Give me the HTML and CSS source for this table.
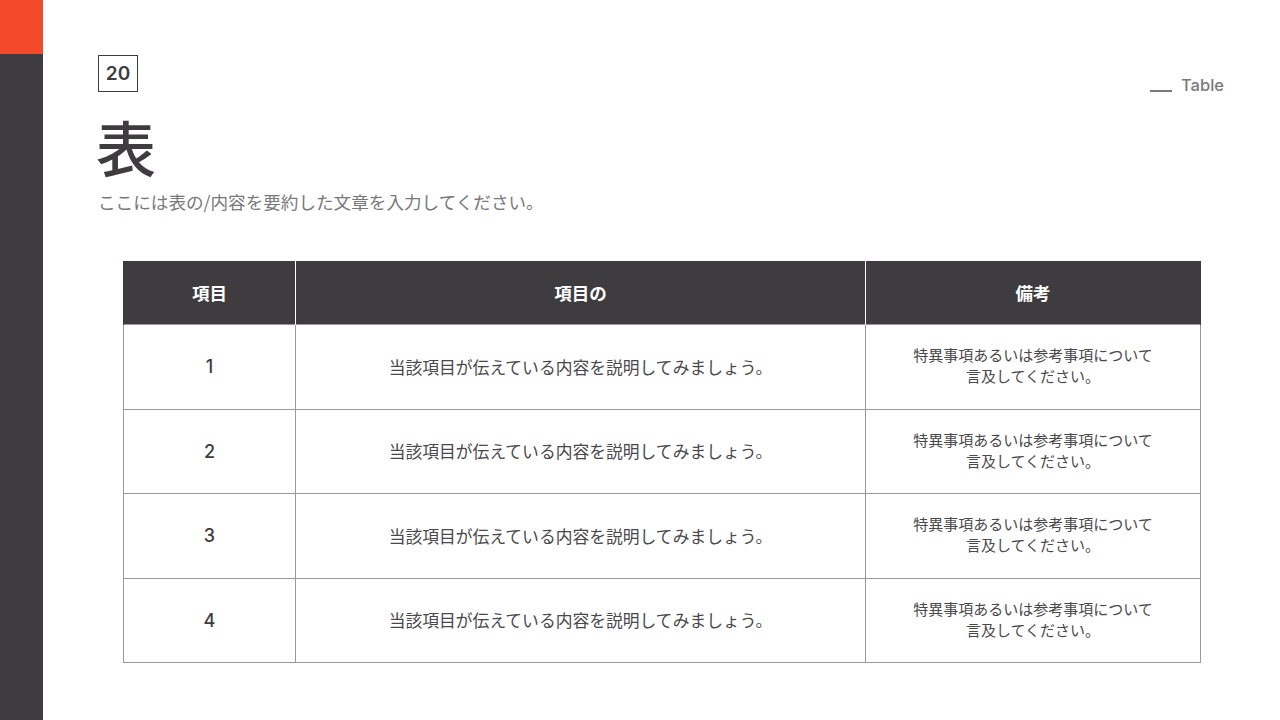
FILE: index.html
```html
<!DOCTYPE html>
<html lang="ja">
<head>
<meta charset="utf-8">
<link rel="stylesheet" href="styles.css">
</head>
<body>
<div class="slide">
  <aside class="side">
    <div class="side-accent"></div>
    <div class="side-dark"></div>
  </aside>
  <main class="main">
    <header class="head">
      <div class="head-left">
        <div class="num">20</div>
        <h1 class="title">表</h1>
        <p class="sub">ここには表の/内容を要約した文章を入力してください。</p>
      </div>
      <div class="label"><span class="dash"></span>Table</div>
    </header>
    <table class="tbl">
      <colgroup>
        <col class="c1"><col class="c2"><col class="c3">
      </colgroup>
      <thead>
        <tr><th>項目</th><th>項目の</th><th>備考</th></tr>
      </thead>
      <tbody>
        <tr><td class="n">1</td><td>当該項目が伝えている内容を説明してみましょう。</td><td class="r">特異事項あるいは参考事項について<br>言及してください。</td></tr>
        <tr><td class="n">2</td><td>当該項目が伝えている内容を説明してみましょう。</td><td class="r">特異事項あるいは参考事項について<br>言及してください。</td></tr>
        <tr><td class="n">3</td><td>当該項目が伝えている内容を説明してみましょう。</td><td class="r">特異事項あるいは参考事項について<br>言及してください。</td></tr>
        <tr><td class="n">4</td><td>当該項目が伝えている内容を説明してみましょう。</td><td class="r">特異事項あるいは参考事項について<br>言及してください。</td></tr>
      </tbody>
    </table>
  </main>
</div>
</body>
</html>
```
FILE: styles.css
```css
html, body {
  margin: 0;
  padding: 0;
  background: #ffffff;
}
body {
  font-family: "Inter", "Noto Sans CJK JP", sans-serif;
  color: #3e3c3f;
}
.slide {
  width: 1280px;
  height: 720px;
  display: flex;
  overflow: hidden;
}
.side {
  width: 43px;
  display: flex;
  flex-direction: column;
  flex-shrink: 0;
}
.side-accent {
  height: 54px;
  background: #f5492b;
}
.side-dark {
  flex: 1;
  background: #3e3c3f;
}
.main {
  flex: 1;
  padding: 55px 56px 0 55px;
}
.head {
  display: flex;
  justify-content: space-between;
  align-items: flex-start;
}
.num {
  width: 38px;
  height: 35px;
  border: 1px solid #3e3c3f;
  display: flex;
  align-items: center;
  justify-content: center;
  font-family: "Inter", sans-serif;
  font-weight: 600;
  font-size: 19px;
  color: #3e3c3f;
}
.title {
  margin: 24px 0 0 -2px;
  font-family: "Noto Sans CJK JP", sans-serif;
  font-weight: 500;
  font-size: 60px;
  line-height: 60px;
  height: 60px;
  color: #3e3c3f;
}
.sub {
  margin: 14px 0 0;
  font-family: "Noto Sans CJK JP", sans-serif;
  font-size: 17.6px;
  line-height: 24px;
  color: #7a787b;
}
.label {
  margin-top: 20px;
  display: flex;
  align-items: center;
  font-family: "Inter", sans-serif;
  font-weight: 500;
  font-size: 16.5px;
  color: #7a787b;
}
.dash {
  display: inline-block;
  width: 22px;
  height: 2px;
  background: #7a787b;
  margin: 12px 9px 0 0;
}
.tbl {
  margin: 47px 0 0 25px;
  width: 1077px;
  border-collapse: collapse;
  table-layout: fixed;
}
.c1 { width: 172px; }
.c2 { width: 570px; }
.c3 { width: 335px; }
.tbl th {
  height: 63px;
  padding: 0;
  background: #3e3c3f;
  color: #ffffff;
  font-family: "Inter", "Noto Sans CJK JP", sans-serif;
  font-weight: 700;
  font-size: 17.5px;
  border-left: 1px solid #ffffff;
  border-right: 1px solid #ffffff;
}
.tbl th:first-child { border-left-color: #3e3c3f; }
.tbl th:last-child { border-right-color: #3e3c3f; }
.tbl td {
  height: 83.5px;
  padding: 0;
  border: 1px solid #9a989b;
  text-align: center;
  font-family: "Noto Sans CJK JP", sans-serif;
  font-size: 16.8px;
  color: #4a484b;
}
.tbl td.n {
  font-family: "Inter", sans-serif;
  font-weight: 500;
  font-size: 18px;
  color: #3e3c3f;
}
.tbl td.r {
  height: 80.5px;
  font-size: 15px;
  line-height: 21px;
  padding-bottom: 3px;
}
```
